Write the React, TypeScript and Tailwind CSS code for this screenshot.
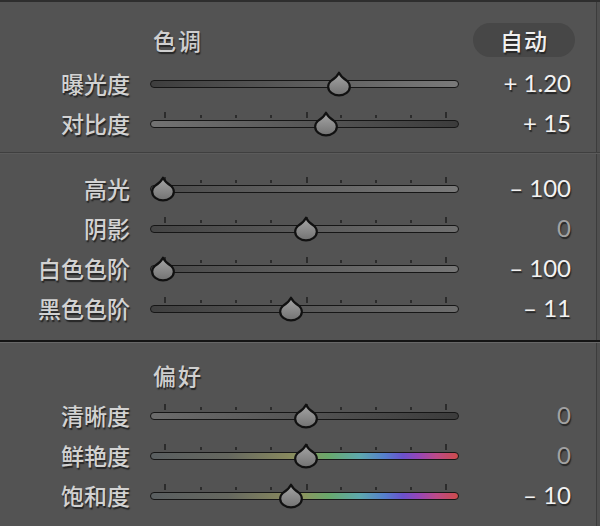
type Row = {
  label: string;
  value: string;
  pos: number;
  track: string;
  dim?: boolean;
  ticks?: boolean;
};

const GRAY_UP = "linear-gradient(90deg,#3e3e3e,#7a7a7a)";
const GRAY_DOWN = "linear-gradient(90deg,#727272,#3c3c3c)";
const HUE =
  "linear-gradient(90deg,#5a5f61 0%,#65675f 25%,#86875e 44%,#8a965f 50%,#68a86c 58%,#5ea8ae 68%,#5580cc 76%,#6a52cc 82%,#9446b8 87%,#bc4a88 93%,#cc4c4c 100%)";

const tone: Row[] = [
  { label: "曝光度", value: "+ 1.20", pos: 189, track: GRAY_UP, ticks: false },
  { label: "对比度", value: "+ 15", pos: 176, track: GRAY_DOWN },
];

const light: Row[] = [
  { label: "高光", value: "– 100", pos: 13, track: "linear-gradient(90deg,#4a4a4a,#7a7a7a)" },
  { label: "阴影", value: "0", pos: 156, track: "linear-gradient(90deg,#454545,#707070)", dim: true },
  { label: "白色色阶", value: "– 100", pos: 13, track: "linear-gradient(90deg,#484848,#767676)" },
  { label: "黑色色阶", value: "– 11", pos: 141, track: "linear-gradient(90deg,#404040,#6e6e6e)" },
];

const pref: Row[] = [
  { label: "清晰度", value: "0", pos: 156, track: "linear-gradient(90deg,#6c6c6c,#3c3c3c)", dim: true },
  { label: "鲜艳度", value: "0", pos: 156, track: HUE, dim: true },
  { label: "饱和度", value: "– 10", pos: 141, track: HUE },
];

const TICKS = [14, 50, 85, 120, 156, 190, 225, 260, 295];

const cjk = "font-['Noto_Sans_CJK_SC','Noto_Sans',sans-serif]";
const shadow = "[text-shadow:1px_2px_1px_#262626]";

function Thumb({ x }: { x: number }) {
  return (
    <svg
      width="26"
      height="26"
      viewBox="0 0 24 24"
      className="absolute top-[calc(50%+1px)] -translate-x-1/2 -translate-y-1/2"
      style={{ left: x }}
    >
      <defs>
        <linearGradient id="tg" x1="0" y1="0" x2="0" y2="1">
          <stop offset="0" stopColor="#a6a6a6" />
          <stop offset="1" stopColor="#727272" />
        </linearGradient>
      </defs>
      <path
        d="M12 1.6 Q14.2 6 19.26 9 A10 8 0 1 1 4.74 9 Q9.8 6 12 1.6 Z"
        fill="url(#tg)"
        stroke="#111"
        strokeWidth="2"
        strokeLinejoin="round"
      />
    </svg>
  );
}

function Slider({ row }: { row: Row }) {
  return (
    <div className="relative h-full w-[309px]">
      {row.ticks !== false &&
        TICKS.map((t, i) => {
          const tall = i === 0 || i === 4 || i === 8;
          return (
            <div
              key={t}
              className={
                "absolute bottom-[calc(50%+5px)] w-[2px] bg-[#2c2c2c] " +
                (tall ? "h-[6px]" : "h-[3px]")
              }
              style={{ left: t }}
            />
          );
        })}
      <div
        className="absolute inset-x-0 top-[calc(50%+1px)] h-[8px] -translate-y-1/2 rounded-full border-[1.5px] border-[#161616]"
        style={{ background: row.track }}
      />
      <Thumb x={row.pos} />
    </div>
  );
}

function SliderRow({ row }: { row: Row }) {
  return (
    <div className="flex h-10 items-center">
      <div className={`w-[130px] text-right text-[23px] font-medium text-[#d2d2d2] ${cjk} ${shadow}`}>
        {row.label}
      </div>
      <div className="ml-5 h-full">
        <Slider row={row} />
      </div>
      <div
        className={
          `w-[112px] text-right font-['Lato','Open_Sans',sans-serif] text-[24px] ${shadow} ` +
          (row.dim ? "text-[#a2a2a2]" : "text-[#f2f2f2]")
        }
      >
        {row.value}
      </div>
    </div>
  );
}

function Heading({ title, auto }: { title: string; auto?: boolean }) {
  return (
    <div className="flex h-10 items-center">
      <div className={`ml-[153px] text-[23px] font-medium tracking-[2px] text-[#cfcfcf] ${cjk} ${shadow}`}>
        {title}
      </div>
      {auto && (
        <div
          className={`ml-auto mr-[21px] flex h-[34px] w-[102px] items-center justify-center rounded-full bg-[#474747] text-[23px] font-medium tracking-[1px] text-[#f0f0f0] ${cjk} ${shadow}`}
        >
          自动
        </div>
      )}
    </div>
  );
}

export default function App() {
  return (
    <div className="flex h-[526px] w-[600px] overflow-hidden border-t-2 border-[#2e2e2e] bg-[#4f4f4f]">
      <div className="flex w-full flex-col">
        <div className="w-[597px] border-r border-[#3c3c3c] bg-[#535353]">
          {/* 色调 */}
          <div className="pt-[18px]">
            <Heading title="色调" auto />
            <div className="mt-[3px] pb-[9px]">
              {tone.map((r) => (
                <SliderRow key={r.label} row={r} />
              ))}
            </div>
          </div>
        </div>
        <div className="h-px bg-[#3f3f3f]" />
        <div className="h-px bg-[#5b5b5b]" />
        <div className="w-[597px] border-r border-[#3c3c3c] bg-[#535353] pt-[14px] pb-[12px]">
          {light.map((r) => (
            <SliderRow key={r.label} row={r} />
          ))}
        </div>
        <div className="h-[2px] bg-[#141414]" />
        <div className="h-px bg-[#676767]" />
        <div className="w-[597px] flex-1 border-r border-[#3c3c3c] bg-[#535353] pt-[12px]">
          <Heading title="偏好" />
          {pref.map((r) => (
            <SliderRow key={r.label} row={r} />
          ))}
        </div>
      </div>
    </div>
  );
}
